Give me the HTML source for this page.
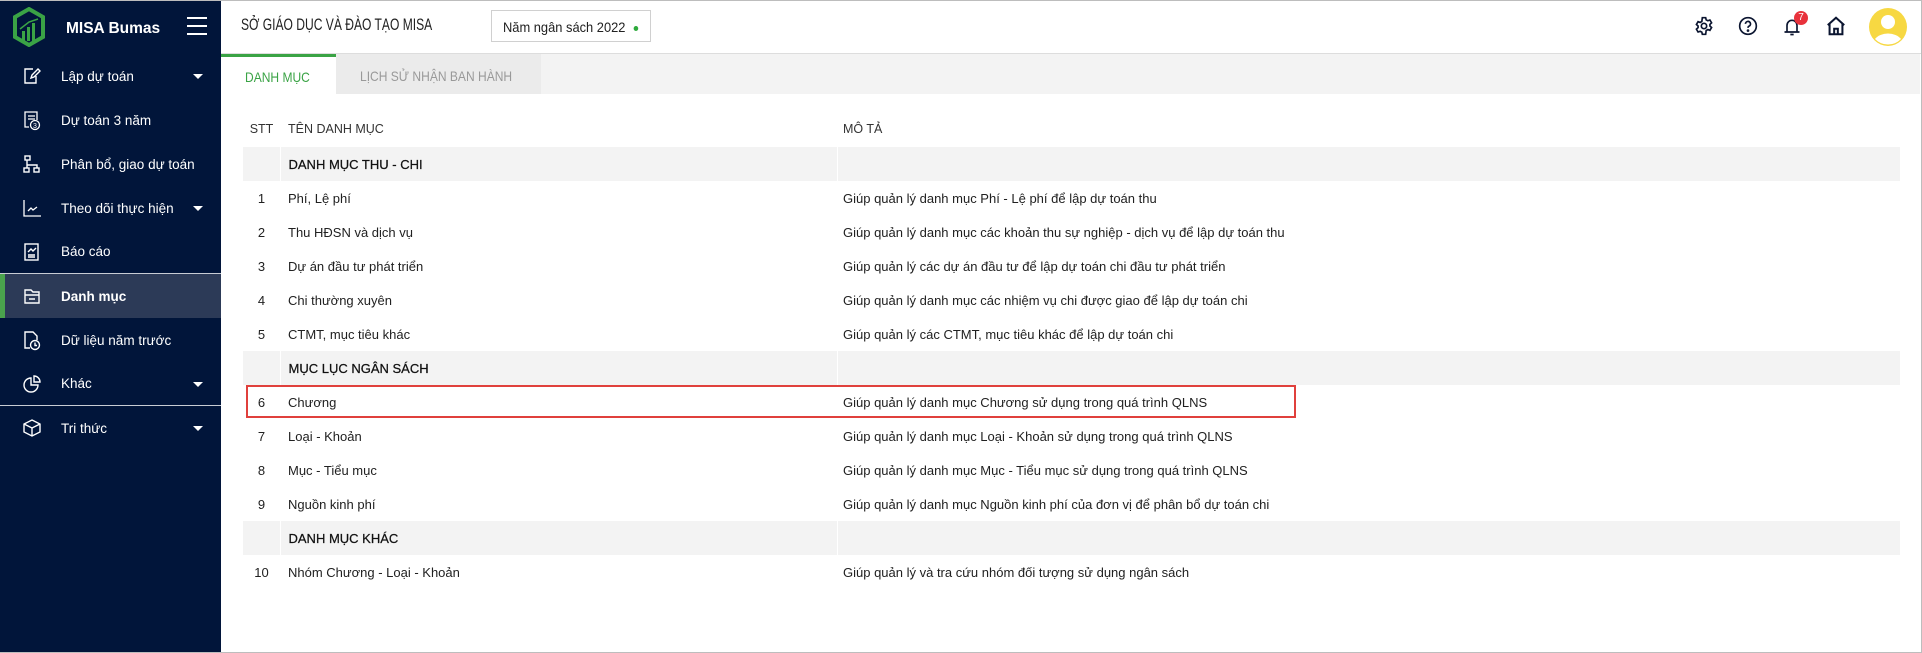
<!DOCTYPE html><html><head><meta charset="utf-8"><style>
*{box-sizing:border-box;margin:0;padding:0}
body{width:1922px;height:653px;overflow:hidden;font-family:"Liberation Sans",sans-serif;background:#fff;position:relative;color:#212121}
.frame{position:absolute;left:0;top:0;width:1922px;height:653px;border:1px solid #bdbdbd;border-left:none;pointer-events:none;z-index:9}
.side{position:absolute;left:0;top:0;width:221px;height:653px;background:#01153a;color:#fff}
.side .item{position:absolute;left:0;width:221px;height:44px;display:flex;align-items:center;font-size:13.5px}
.side .item svg{position:absolute;left:23px;top:13px}
.side .item span{position:absolute;left:61px}
.side .caret{position:absolute;left:193px;top:20px;width:0;height:0;border-left:5px solid transparent;border-right:5px solid transparent;border-top:5px solid #fff}
.hdr{position:absolute;left:221px;top:0;right:0;height:54px;border-bottom:1px solid #ddd}
.tabs{position:absolute;left:221px;top:54px;right:2px;height:40px;background:#f3f3f3}
table{position:absolute;left:243px;top:110px;width:1657px;border-collapse:collapse;font-size:13px}
td{height:34px;padding:0;vertical-align:middle}
.c1{width:37px;text-align:center}
.c2{width:557px;padding-left:8px}
.c3{padding-left:6px}
tr.g td{background:#f3f3f3;font-size:13px;color:#111;-webkit-text-stroke:0.25px #111}
tr.g td+td{border-left:1px solid #fff}
th{font-weight:normal;text-align:left;height:37px;font-size:12.5px;color:#333}
.nar{display:inline-block;transform:scaleX(0.8);transform-origin:left center;white-space:nowrap}
</style></head><body>
<div class="side">
 <svg style="position:absolute;left:12px;top:7px" width="34" height="40" viewBox="0 0 34 40"><path d="M17 2 L31 10 V30 L17 38 L3 30 V10 Z" fill="none" stroke="#3aa345" stroke-width="4"/><rect x="10" y="24" width="3" height="10" fill="#3aa345"/><rect x="15" y="20" width="3" height="14" fill="#3aa345"/><rect x="20" y="16" width="3" height="18" fill="#3aa345"/><path d="M8 22 L17 15 L26 12" stroke="#3aa345" stroke-width="1.5" fill="none"/></svg>
 <div style="position:absolute;left:66px;top:20px;font-weight:bold;font-size:15.5px">MISA Bumas</div>
 <div style="position:absolute;left:187px;top:17px;width:20px;height:18px;border-top:2px solid #fff;border-bottom:2px solid #fff"><div style="margin-top:6px;height:2px;background:#fff"></div></div>
 <div class="item" style="top:54px"><svg width="18" height="18" viewBox="0 0 18 18" fill="none" stroke="#fff" stroke-width="1.4"><path d="M10 2H2v14h11V9"/><path d="M8 11l1-3 6-6 2 2-6 6z"/></svg><span>Lập dự toán</span><i class="caret"></i></div>
 <div class="item" style="top:98px"><svg width="18" height="20" viewBox="0 0 18 20" fill="none" stroke="#fff" stroke-width="1.3"><path d="M6 16H2V1h12v8"/><path d="M5 5h7M5 8h7"/><circle cx="12" cy="14" r="4.5"/><text x="10" y="17" font-size="7" fill="#fff" stroke="none" font-family="Liberation Sans">3</text></svg><span>Dự toán 3 năm</span></div>
 <div class="item" style="top:142px"><svg width="18" height="18" viewBox="0 0 18 18" fill="none" stroke="#fff" stroke-width="1.4"><rect x="2" y="1" width="5" height="4"/><rect x="1" y="13" width="5" height="4"/><rect x="11" y="13" width="5" height="4"/><path d="M4 5v5h10v3M4 10v3"/></svg><span>Phân bổ, giao dự toán</span></div>
 <div class="item" style="top:186px"><svg width="18" height="18" viewBox="0 0 18 18" fill="none" stroke="#fff" stroke-width="1.3"><path d="M1 1v16h17"/><path d="M5 12l3-3 2 2 4-3"/></svg><span>Theo dõi thực hiện</span><i class="caret"></i></div>
 <div class="item" style="top:230px;border-bottom:1px solid #c8ccd4"><svg width="18" height="18" viewBox="0 0 18 18" fill="none" stroke="#fff" stroke-width="1.4"><rect x="2" y="1" width="13" height="16"/><path d="M5 9l3-3 2 2 3-3M5 12h7M5 14h7"/></svg><span>Báo cáo</span></div>
 <div class="item" style="top:274px;background:#2c3a57;border-left:5px solid #4aa34d"><svg style="left:18px" width="18" height="18" viewBox="0 0 18 18" fill="none" stroke="#fff" stroke-width="1.4"><path d="M2 16V3h6l2 2h6v11z"/><path d="M2 8h14M6 12h6"/></svg><span style="left:56px;font-weight:bold">Danh mục</span></div>
 <div class="item" style="top:318px"><svg width="18" height="20" viewBox="0 0 18 20" fill="none" stroke="#fff" stroke-width="1.4"><path d="M7 17H2V1h8l4 4v4"/><circle cx="12" cy="14" r="4.5"/><path d="M12 11.5v3h2"/></svg><span>Dữ liệu năm trước</span></div>
 <div class="item" style="top:362px;border-bottom:1px solid #c8ccd4"><svg width="18" height="18" viewBox="0 0 18 18" fill="none" stroke="#fff" stroke-width="1.4"><path d="M8 3a7 7 0 1 0 7 7H8z"/><path d="M11 1a6 6 0 0 1 6 6h-6z"/></svg><span>Khác</span><i class="caret"></i></div>
 <div class="item" style="top:406px"><svg width="18" height="18" viewBox="0 0 18 18" fill="none" stroke="#fff" stroke-width="1.4"><path d="M9 1l8 4v8l-8 4-8-4V5z"/><path d="M1 5l8 4 8-4M9 9v8"/></svg><span>Tri thức</span><i class="caret"></i></div>
</div>
<div class="hdr">
 <div style="position:absolute;left:20px;top:15px;font-size:17px;color:#222"><span class="nar" style="transform:scaleX(0.71)">SỞ GIÁO DỤC VÀ ĐÀO TẠO MISA</span></div>
 <div style="position:absolute;left:270px;top:10px;width:160px;height:32px;border:1px solid #d0d0d0;font-size:14px;padding:8px 0 0 11px"><span class="nar" style="transform:scaleX(0.92)">Năm ngân sách 2022 <span style="display:inline-block;width:5px;height:5px;border-radius:50%;background:#2eaa3c;margin-left:5px;vertical-align:middle"></span></span></div>
 <svg style="position:absolute;left:1473px;top:16px" width="20" height="20" viewBox="0 0 24 24" fill="none" stroke="#0b1530" stroke-width="2"><circle cx="12" cy="12" r="3.2"/><path d="M10 2h4l.6 2.6 2 1.1 2.5-.9 2 3.4-2 1.8v2l2 1.8-2 3.4-2.5-.9-2 1.1L14 22h-4l-.6-2.6-2-1.1-2.5.9-2-3.4 2-1.8v-2l-2-1.8 2-3.4 2.5.9 2-1.1z"/></svg>
 <svg style="position:absolute;left:1517px;top:16px" width="20" height="20" viewBox="0 0 24 24" fill="none" stroke="#0b1530" stroke-width="2"><circle cx="12" cy="12" r="10"/><path d="M9 9.5a3 3 0 1 1 4 2.8c-.8.4-1 1-1 2"/><circle cx="12" cy="17.5" r=".6" fill="#0b1530"/></svg>
 <svg style="position:absolute;left:1561px;top:17px" width="20" height="20" viewBox="0 0 24 24" fill="none" stroke="#0b1530" stroke-width="2"><path d="M6 18V10a6 6 0 0 1 12 0v8M3 18h18M10 21h4"/></svg>
 <div style="position:absolute;left:1573px;top:11px;width:14px;height:14px;border-radius:50%;background:#e8323c;color:#fff;font-size:10px;text-align:center;line-height:14px">7</div>
 <svg style="position:absolute;left:1604px;top:15px" width="22" height="22" viewBox="0 0 24 24" fill="none" stroke="#0b1530" stroke-width="2.2"><path d="M3 11L12 3l9 8M5 9v12h14V9"/><path d="M10 21v-6h4v6"/></svg>
 <svg style="position:absolute;left:1648px;top:8px" width="38" height="38" viewBox="0 0 38 38"><circle cx="19" cy="19" r="19" fill="#f7d842"/><circle cx="19" cy="14" r="7" fill="#fff"/><path d="M6 31a15 11 0 0 1 26 0a18 18 0 0 1-26 0z" fill="#fff"/></svg>
</div>
<div class="tabs">
 <div style="position:absolute;left:0;top:0;width:115px;height:40px;background:#fff;border-top:3px solid #3aa345;color:#3aa345;font-size:14px;padding:12px 0 0 24px"><span class="nar" style="transform:scaleX(0.86)">DANH MỤC</span></div>
 <div style="position:absolute;left:115px;top:0;width:205px;height:40px;background:#ebebeb;color:#999;font-size:14px;padding:14px 0 0 24px"><span class="nar" style="transform:scaleX(0.86)">LỊCH SỬ NHẬN BAN HÀNH</span></div>
</div>
<table>
<tr><th class="c1" style="text-align:center">STT</th><th class="c2">TÊN DANH MỤC</th><th class="c3">MÔ TẢ</th></tr>
<tr class="g"><td class="c1"></td><td class="c2">DANH MỤC THU - CHI</td><td class="c3"></td></tr>
<tr><td class="c1">1</td><td class="c2">Phí, Lệ phí</td><td class="c3">Giúp quản lý danh mục Phí - Lệ phí để lập dự toán thu</td></tr>
<tr><td class="c1">2</td><td class="c2">Thu HĐSN và dịch vụ</td><td class="c3">Giúp quản lý danh mục các khoản thu sự nghiệp - dịch vụ để lập dự toán thu</td></tr>
<tr><td class="c1">3</td><td class="c2">Dự án đầu tư phát triển</td><td class="c3">Giúp quản lý các dự án đầu tư để lập dự toán chi đầu tư phát triển</td></tr>
<tr><td class="c1">4</td><td class="c2">Chi thường xuyên</td><td class="c3">Giúp quản lý danh mục các nhiệm vụ chi được giao để lập dự toán chi</td></tr>
<tr><td class="c1">5</td><td class="c2">CTMT, mục tiêu khác</td><td class="c3">Giúp quản lý các CTMT, mục tiêu khác để lập dự toán chi</td></tr>
<tr class="g"><td class="c1"></td><td class="c2">MỤC LỤC NGÂN SÁCH</td><td class="c3"></td></tr>
<tr><td class="c1">6</td><td class="c2">Chương</td><td class="c3">Giúp quản lý danh mục Chương sử dụng trong quá trình QLNS</td></tr>
<tr><td class="c1">7</td><td class="c2">Loại - Khoản</td><td class="c3">Giúp quản lý danh mục Loại - Khoản sử dụng trong quá trình QLNS</td></tr>
<tr><td class="c1">8</td><td class="c2">Mục - Tiểu mục</td><td class="c3">Giúp quản lý danh mục Mục - Tiểu mục sử dụng trong quá trình QLNS</td></tr>
<tr><td class="c1">9</td><td class="c2">Nguồn kinh phí</td><td class="c3">Giúp quản lý danh mục Nguồn kinh phí của đơn vị để phân bổ dự toán chi</td></tr>
<tr class="g"><td class="c1"></td><td class="c2">DANH MỤC KHÁC</td><td class="c3"></td></tr>
<tr><td class="c1">10</td><td class="c2">Nhóm Chương - Loại - Khoản</td><td class="c3">Giúp quản lý và tra cứu nhóm đối tượng sử dụng ngân sách</td></tr>
</table>
<div style="position:absolute;left:246px;top:385px;width:1050px;height:33px;border:2px solid #e0403c"></div>
<div class="frame"></div>
</body></html>
